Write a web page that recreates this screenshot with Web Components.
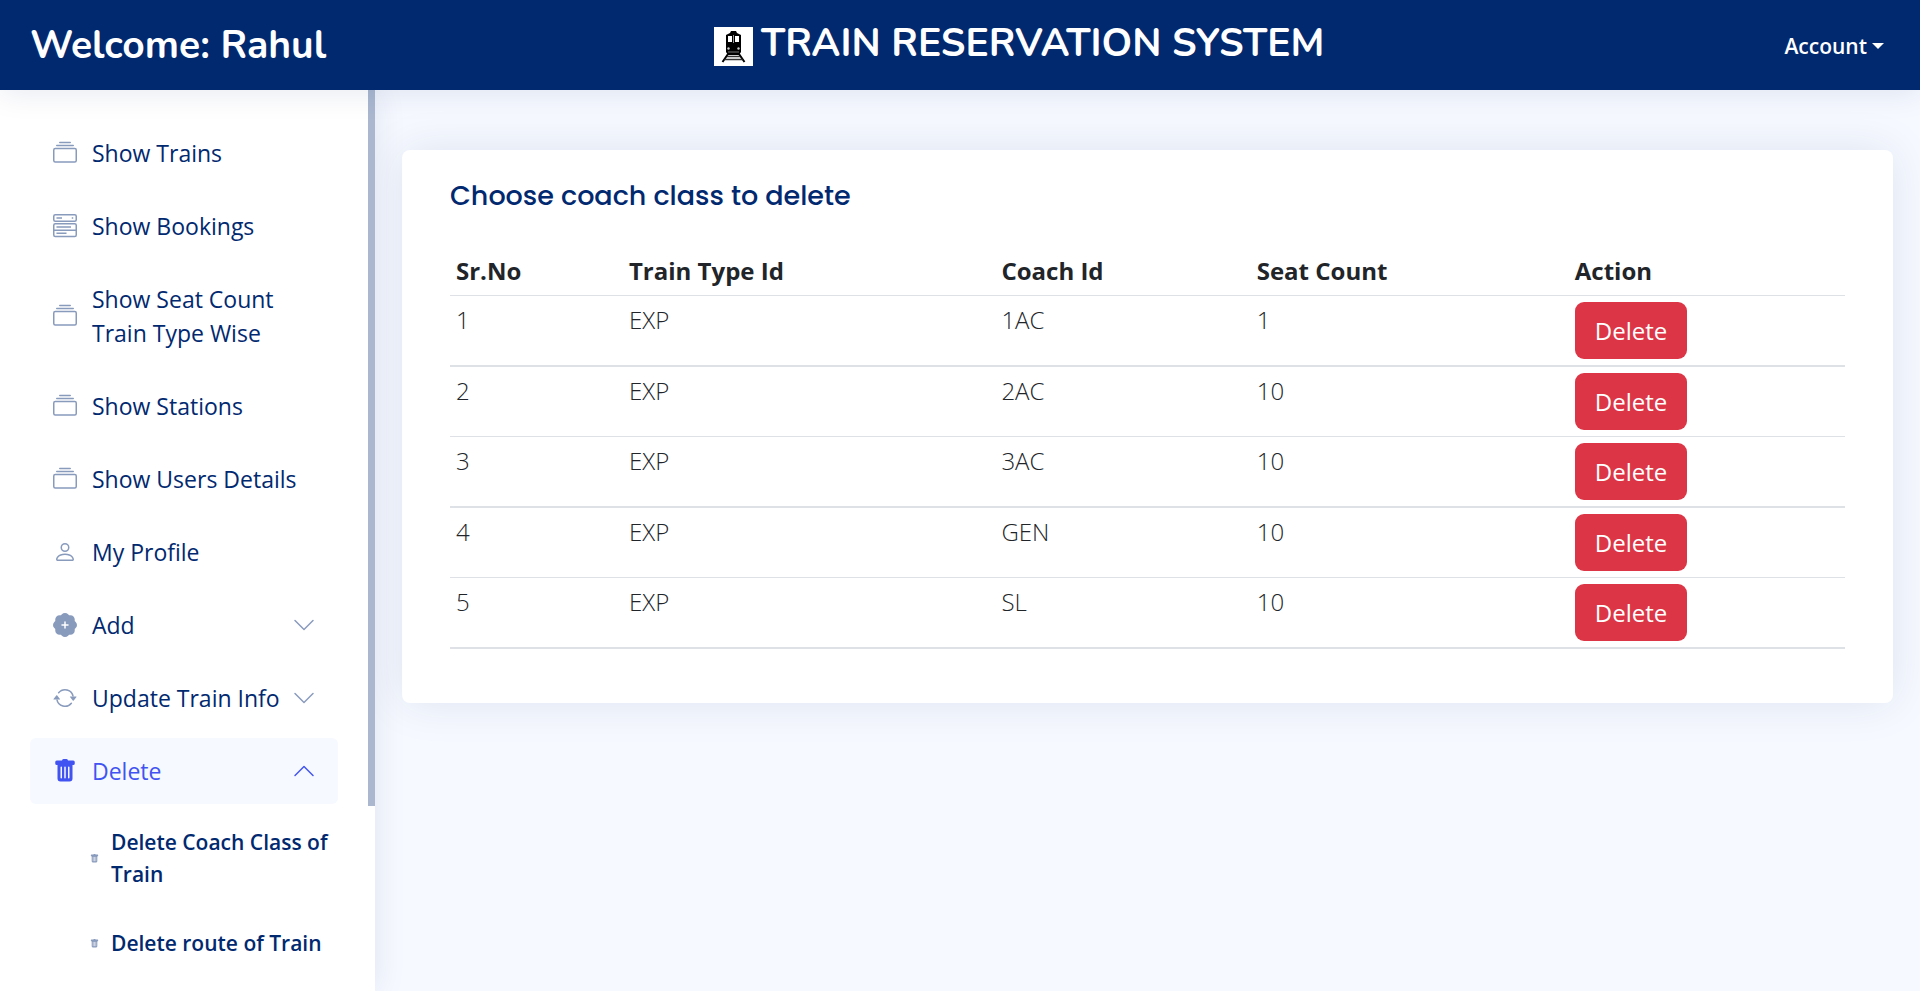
<!DOCTYPE html>
<html lang="en">
<head>
<meta charset="utf-8">
<title>Train Reservation System</title>
<style>
  body {
    margin: 0;
    min-height: 100vh;
    background: #f6f9ff;
    color: #212529;
    font-family: "Open Sans", "Noto Sans", sans-serif;
    font-size: 24px;
    line-height: 36px;
  }
</style>
</head>
<body>
<train-app></train-app>

<template id="t-app">
  <style>
    :host { display: flex; flex-direction: column; height: 100vh; overflow: hidden; }
    .body { flex: 1; min-height: 0; display: grid; grid-template-columns: 375px minmax(0, 1fr); }
    main { padding: 60px 27px; min-width: 0; }
    app-header { z-index: 2; }
    app-sidebar { z-index: 1; }
  </style>
  <app-header user="Rahul"></app-header>
  <div class="body">
    <app-sidebar>
      <nav-item icon="collection">Show Trains</nav-item>
      <nav-item icon="stack">Show Bookings</nav-item>
      <nav-item icon="collection">Show Seat Count Train Type Wise</nav-item>
      <nav-item icon="collection">Show Stations</nav-item>
      <nav-item icon="collection">Show Users Details</nav-item>
      <nav-item icon="person">My Profile</nav-item>
      <nav-item icon="plus" chevron="down">Add</nav-item>
      <nav-item icon="repeat" chevron="down">Update Train Info</nav-item>
      <nav-item icon="trash" chevron="up" active>Delete</nav-item>
      <nav-item icon="trash" sub>Delete Coach Class of Train</nav-item>
      <nav-item icon="trash" sub>Delete route of Train</nav-item>
    </app-sidebar>
    <main>
      <page-card>
        <span slot="title">Choose coach class to delete</span>
        <coach-table></coach-table>
      </page-card>
    </main>
  </div>
</template>

<template id="t-header">
  <style>
    :host {
      display: grid; grid-template-columns: 11fr auto 9fr; align-items: center;
      height: 90px; padding: 2px 36px 0 30px; box-sizing: border-box;
      background: #012970; color: #fff; position: relative;
      box-shadow: 0 3px 30px rgba(1, 41, 112, .1);
    }
    h1, h2 { margin: 0; font-family: Nunito, Lato, sans-serif; font-weight: 700; font-size: 39px; line-height: 48px; white-space: nowrap; }
    .brand { display: flex; gap: 8px; align-items: center; padding-bottom: 4px; }
    .brand svg { flex: none; width: 39px; height: 39px; background: #fff; margin-top: 4px; }
    button {
      justify-self: end; display: flex; align-items: center; gap: 5px; padding: 0; border: 0;
      background: none; color: #fff; font: 600 21px/32px "Open Sans", sans-serif; cursor: pointer;
    }
    .caret { border: 6px solid transparent; border-top-color: #fff; border-bottom: 0; }
  </style>
  <h2>Welcome: <span id="user"></span></h2>
  <div class="brand">
    <svg viewBox="0 0 39 39" aria-hidden="true">
      <path d="M17 4h5l1 2 4 2v17l-2 3H14l-2-3V8l4-2z"/>
      <path d="M14 9h4v6h-4zM21 9h4v6h-4z" fill="#fff"/>
      <path d="M19 8h1v8h-1z" fill="#999"/>
      <circle cx="14.500" cy="21.500" r="1.200" fill="#ccc"/><circle cx="24.500" cy="21.500" r="1.200" fill="#ccc"/>
      <path d="M14 25h11" stroke="#777" fill="none"/>
      <path d="M14 27 8.500 35M25 27l5.500 8" stroke="#000" stroke-width="2" fill="none"/>
      <path d="M13 29.500h13M10.500 32.500h18" stroke="#333" stroke-width="1.500" fill="none"/>
    </svg>
    <h1>TRAIN RESERVATION SYSTEM</h1>
  </div>
  <button type="button" aria-haspopup="true">Account<span class="caret"></span></button>
</template>

<template id="t-sidebar">
  <style>
    :host {
      display: grid; grid-template-columns: minmax(0, 1fr) 7px; min-height: 0; position: relative;
      background: #fff; box-shadow: 0 0 30px rgba(1, 41, 112, .1);
    }
    nav { display: flex; flex-direction: column; gap: 7px; padding: 30px; min-height: 0; overflow: hidden; }
    .thumb { height: 79.5%; background: #aab7cf; }
  </style>
  <nav aria-label="Main"><slot></slot></nav>
  <div class="thumb"></div>
</template>

<template id="t-item">
  <style>
    :host { display: block; flex: none; color: #012970; }
    a {
      display: flex; align-items: center; gap: 15px; padding: 16px 22px 16px 23px; border-radius: 6px;
      color: inherit; text-decoration: none; font-weight: 500; font-size: 23px; line-height: 34px;
    }
    .label { flex: 1; }
    svg { flex: none; width: 24px; height: 24px; fill: #899bbd; }
    .chev { margin-left: -15px; }
    :host([chevron]) .label { white-space: nowrap; }
    :host([active]) { color: #4154f1; }
    :host([active]) a { background: #f6f9ff; }
    :host([active]) svg { fill: #4154f1; }
    :host([sub]) a { padding: 15px 0 15px 60px; gap: 12px; font-size: 21px; font-weight: 600; line-height: 32px; }
    :host([sub]) svg { width: 9px; height: 9px; }
  </style>
  <a href="#"><svg class="icon" viewBox="0 0 16 16" aria-hidden="true"></svg><span class="label"><slot></slot></span></a>
</template>

<template id="t-card">
  <style>
    :host { display: block; background: #fff; border-radius: 8px; padding: 30px 48px; box-shadow: 0 0 45px rgba(1, 41, 112, .1); }
    h2 { margin: 0 0 36px; color: #012970; font: 500 27px/32px Poppins, Inter, sans-serif; }
  </style>
  <h2><slot name="title"></slot></h2>
  <slot></slot>
</template>

<template id="t-table">
  <style>
    :host { display: block; margin-bottom: 24px; }
    table { width: 100%; border-collapse: separate; border-spacing: 0; table-layout: fixed; font-weight: 300; }
    th, td { padding: 6px; text-align: left; vertical-align: top; border-bottom: 1px solid #dee2e6; }
    th { font-weight: 700; padding-top: 5px; }
    tbody tr:nth-child(odd) td { border-bottom-width: 2px; }
    button {
      display: block; height: 57px; padding: 0 20px; border: 0; border-radius: 9px;
      background: #dc3545; color: #fff; font: 400 24px/36px "Open Sans", sans-serif; cursor: pointer;
    }
    .c1 { width: 12.4%; } .c2 { width: 26.7%; } .c3 { width: 18.3%; } .c4 { width: 22.8%; }
  </style>
  <table>
    <colgroup><col class="c1"><col class="c2"><col class="c3"><col class="c4"><col></colgroup>
    <thead><tr><th scope="col">Sr.No</th><th scope="col">Train Type Id</th><th scope="col">Coach Id</th><th scope="col">Seat Count</th><th scope="col">Action</th></tr></thead>
    <tbody></tbody>
  </table>
</template>

<script>
  const ICONS = {
    collection: '<path d="M2.5 3.5a.5.5 0 0 1 0-1h11a.5.5 0 0 1 0 1h-11zm2-2a.5.5 0 0 1 0-1h7a.5.5 0 0 1 0 1h-7zM0 13a1.500 1.500 0 0 0 1.500 1.500h13A1.500 1.500 0 0 0 16 13V6a1.500 1.500 0 0 0-1.500-1.500h-13A1.500 1.500 0 0 0 0 6v7zm1.500.5A.5.5 0 0 1 1 13V6a.5.5 0 0 1 .5-.5h13a.5.5 0 0 1 .5.5v7a.5.5 0 0 1-.5.5h-13z"/>',
    stack: '<g fill="none" stroke="#899bbd"><rect x=".5" y=".5" width="15" height="4.300" rx="1"/><rect x=".5" y="6.500" width="15" height="8.500" rx="1"/><path d="M.5 10.800h15M2.300 2.700H6M12.500 2.700h1M2.300 8.700H12M2.300 12.900H9"/></g>',
    person: '<path d="M8 8a3 3 0 1 0 0-6 3 3 0 0 0 0 6zm2-3a2 2 0 1 1-4 0 2 2 0 0 1 4 0zm4 8c0 1-1 1-1 1H3s-1 0-1-1 1-4 6-4 6 3 6 4zm-1-.004c-.001-.246-.154-.986-.832-1.664C11.516 10.680 10.289 10 8 10c-2.290 0-3.516.68-4.168 1.332-.678.678-.83 1.418-.832 1.664h10z"/>',
    plus: '<path d="M10.067.87a2.890 2.890 0 0 0-4.134 0l-.622.638-.89-.011a2.890 2.890 0 0 0-2.924 2.924l.01.89-.636.622a2.890 2.890 0 0 0 0 4.134l.637.622-.011.89a2.890 2.890 0 0 0 2.924 2.924l.89-.01.622.636a2.890 2.890 0 0 0 4.134 0l.622-.637.89.011a2.890 2.890 0 0 0 2.924-2.924l-.01-.89.636-.622a2.890 2.890 0 0 0 0-4.134l-.637-.622.011-.89a2.890 2.890 0 0 0-2.924-2.924l-.89.01-.622-.636zM8.500 6v1.500H10a.5.5 0 0 1 0 1H8.500V10a.5.5 0 0 1-1 0V8.500H6a.5.5 0 0 1 0-1h1.500V6a.5.5 0 0 1 1 0z"/>',
    repeat: '<path d="M11.534 7h3.932a.25.25 0 0 1 .192.410l-1.966 2.360a.25.25 0 0 1-.384 0l-1.966-2.360a.25.25 0 0 1 .192-.410zm-11 2h3.932a.25.25 0 0 0 .192-.410L2.692 6.230a.25.25 0 0 0-.384 0L.342 8.590A.25.25 0 0 0 .534 9z"/><path d="M8 3c-1.552 0-2.940.707-3.857 1.818a.5.5 0 1 1-.771-.636A6.002 6.002 0 0 1 13.917 7H12.900A5.002 5.002 0 0 0 8 3zM3.100 9a5.002 5.002 0 0 0 8.757 2.182.5.5 0 1 1 .771.636A6.002 6.002 0 0 1 2.083 9H3.100z"/>',
    trash: '<path d="M2.500 1a1 1 0 0 0-1 1v1a1 1 0 0 0 1 1H3v9a2 2 0 0 0 2 2h6a2 2 0 0 0 2-2V4h.5a1 1 0 0 0 1-1V2a1 1 0 0 0-1-1H10a1 1 0 0 0-1-1H7a1 1 0 0 0-1 1H2.500zm3 4a.5.5 0 0 1 .5.5v7a.5.5 0 0 1-1 0v-7a.5.5 0 0 1 .5-.5zM8 5a.5.5 0 0 1 .5.5v7a.5.5 0 0 1-1 0v-7A.5.5 0 0 1 8 5zm3 .5v7a.5.5 0 0 1-1 0v-7a.5.5 0 0 1 1 0z"/>',
    down: '<path d="M1.646 4.646a.5.5 0 0 1 .708 0L8 10.293l5.646-5.647a.5.5 0 0 1 .708.708l-6 6a.5.5 0 0 1-.708 0l-6-6a.5.5 0 0 1 0-.708z"/>',
    up: '<path d="M7.646 4.646a.5.5 0 0 1 .708 0l6 6a.5.5 0 0 1-.708.708L8 5.707l-5.646 5.647a.5.5 0 0 1-.708-.708l6-6z"/>'
  };

  class TemplateElement extends HTMLElement {
    connectedCallback() {
      if (this.shadowRoot) return;
      const root = this.attachShadow({ mode: 'open' });
      root.append(document.getElementById(this.constructor.template).content.cloneNode(true));
      this.ready(root);
    }
    ready() {}
  }

  customElements.define('app-header', class extends TemplateElement {
    static template = 't-header';
    ready(root) { root.getElementById('user').textContent = this.getAttribute('user'); }
  });

  customElements.define('app-sidebar', class extends TemplateElement {
    static template = 't-sidebar';
  });

  customElements.define('nav-item', class extends TemplateElement {
    static template = 't-item';
    ready(root) {
      root.querySelector('.icon').innerHTML = ICONS[this.getAttribute('icon')];
      const chevron = this.getAttribute('chevron');
      if (chevron) {
        root.querySelector('a').insertAdjacentHTML('beforeend',
          `<svg class="chev" viewBox="0 0 16 16" aria-hidden="true">${ICONS[chevron]}</svg>`);
      }
    }
  });

  customElements.define('page-card', class extends TemplateElement {
    static template = 't-card';
  });

  customElements.define('coach-table', class extends TemplateElement {
    static template = 't-table';
    ready(root) {
      const rows = [['EXP', '1AC', 1], ['EXP', '2AC', 10], ['EXP', '3AC', 10], ['EXP', 'GEN', 10], ['EXP', 'SL', 10]];
      root.querySelector('tbody').innerHTML = rows.map((row, i) =>
        `<tr><td>${i + 1}</td>${row.map(v => `<td>${v}</td>`).join('')}<td><button type="button">Delete</button></td></tr>`).join('');
    }
  });

  customElements.define('train-app', class extends TemplateElement {
    static template = 't-app';
  });
</script>
</body>
</html>
